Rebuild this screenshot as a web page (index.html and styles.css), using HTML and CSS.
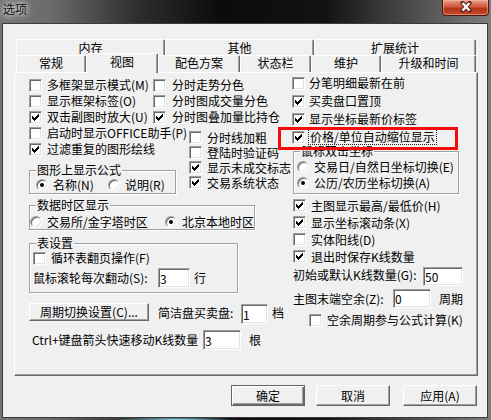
FILE: index.html
```html
<!DOCTYPE html>
<html lang="zh-CN">

<head>
    <meta charset="utf-8">
    <title>选项</title>
    <link rel="stylesheet" href="styles.css">
</head>

<body>

    <svg class="defs" width="0" height="0">
        <symbol id="tick" viewBox="0 0 7 7">
            <path d="M6 0h1v1h-1zM5 1h2v1h-2zM0 2h1v1h-1zM4 2h3v1h-3zM0 3h2v1h-2zM3 3h3v1h-3zM0 4h5v1h-5zM1 5h3v1h-3zM2 6h1v1h-1z" />
        </symbol>
    </svg>

    <div class="window">
        <div class="titlebar">
            <span class="title">选项</span>
            <div class="close">
                <svg width="14" height="12" viewBox="0 0 14 12">
                    <path d="M3.5 2l7 7.5M10.5 2l-7 7.5" stroke="#5a2418" stroke-width="4.2" stroke-linecap="round" />
                    <path d="M3.5 2l7 7.5M10.5 2l-7 7.5" stroke="#fff" stroke-width="2.4" />
                </svg>
            </div>
        </div>

        <div class="client">
            <div class="tabs">
                <div class="tabrow back">
                    <div class="tab tab-mem">内存</div>
                    <div class="tab tab-other">其他</div>
                    <div class="tab tab-ext">扩展统计</div>
                </div>
                <div class="tabrow front">
                    <div class="tab tab-gen">常规</div>
                    <div class="tab tab-view sel">视图</div>
                    <div class="tab tab-color">配色方案</div>
                    <div class="tab tab-status">状态栏</div>
                    <div class="tab tab-maint">维护</div>
                    <div class="tab tab-up">升级和时间</div>
                </div>
            </div>

            <div class="panel">
                <div class="upper">
                    <div class="col col-a">
                        <div class="chk"><span class="box"></span>多框架显示模式(M)</div>
                        <div class="chk"><span class="box"></span>显示框架标签(O)</div>
                        <div class="chk"><span class="box"><svg><use href="#tick" /></svg></span>双击副图时放大(U)</div>
                        <div class="chk"><span class="box"></span>启动时显示OFFICE助手(P)</div>
                        <div class="chk"><span class="box"><svg><use href="#tick" /></svg></span>过滤重复的图形绘线</div>

                        <fieldset class="group g-formula">
                            <legend>图形上显示公式</legend>
                            <div class="in">
                                <span class="opt opt-name"><span class="radio on"></span>名称(N)</span>
                                <span class="opt"><span class="radio"></span>说明(R)</span>
                            </div>
                        </fieldset>
                    </div>

                    <div class="col col-b">
                        <div class="chk"><span class="box"></span>分时走势分色</div>
                        <div class="chk"><span class="box"></span>分时图成交量分色</div>
                        <div class="chk"><span class="box"><svg><use href="#tick" /></svg></span>分时图叠加量比持仓</div>
                        <div class="sub">
                            <div class="chk"><span class="box"></span>分时线加粗</div>
                            <div class="chk"><span class="box"></span>登陆时验证码</div>
                            <div class="chk"><span class="box"><svg><use href="#tick" /></svg></span>显示未成交标志</div>
                            <div class="chk"><span class="box"><svg><use href="#tick" /></svg></span>交易系统状态</div>
                        </div>
                    </div>

                    <div class="col col-c">
                        <div class="chk"><span class="box"></span>分笔明细最新在前</div>
                        <div class="chk"><span class="box"><svg><use href="#tick" /></svg></span>买卖盘口置顶</div>
                        <div class="chk"><span class="box"><svg><use href="#tick" /></svg></span>显示坐标最新价标签</div>
                        <div class="chk focused"><span class="box"><svg><use href="#tick" /></svg></span><span class="focus">价格/单位自动缩位显示</span>
                            <span class="marker"></span>
                        </div>

                        <fieldset class="group g-mouse">
                            <legend>鼠标双击坐标</legend>
                            <div class="in">
                                <div class="opt"><span class="radio"></span>交易日/自然日坐标切换(E)</div>
                                <div class="opt"><span class="radio on"></span><span class="key">公历/农历坐标切换(A)</span></div>
                            </div>
                        </fieldset>
                    </div>
                </div>

                <div class="lower">
                    <div class="col col-left">
                        <fieldset class="group g-zone">
                            <legend>数据时区显示</legend>
                            <div class="in">
                                <span class="opt opt-ex"><span class="radio"></span>交易所/金字塔时区</span>
                                <span class="opt"><span class="radio on"></span>北京本地时区</span>
                            </div>
                        </fieldset>

                        <fieldset class="group g-table">
                            <legend>表设置</legend>
                            <div class="in">
                                <div class="chk"><span class="box"></span>循环表翻页操作(F)</div>
                                <div class="field-row">
                                    <span class="lbl lbl-wheel">鼠标滚轮每次翻动(S):</span>
                                    <input class="edit edit-wheel" type="text" value="3">
                                    <span class="unit">行</span>
                                </div>
                            </div>
                        </fieldset>

                        <div class="field-row period-row">
                            <button class="btn btn-period">周期切换设置(C)...</button>
                            <span class="lbl lbl-simple">简洁盘买卖盘:</span>
                            <input class="edit edit-simple" type="text" value="1">
                            <span class="unit">档</span>
                        </div>

                        <div class="field-row ctrl-row">
                            <span class="lbl lbl-ctrl">Ctrl+键盘箭头快速移动K线数量</span>
                            <input class="edit edit-ctrl" type="text" value="3">
                            <span class="unit unit-gen">根</span>
                        </div>
                    </div>

                    <div class="col col-right">
                        <div class="chk"><span class="box"><svg><use href="#tick" /></svg></span>主图显示最高/最低价(H)</div>
                        <div class="chk"><span class="box"><svg><use href="#tick" /></svg></span>显示坐标滚动条(X)</div>
                        <div class="chk"><span class="box"></span>实体阳线(D)</div>
                        <div class="chk"><span class="box"><svg><use href="#tick" /></svg></span>退出时保存K线数量</div>

                        <div class="field-row init-row">
                            <span class="lbl lbl-init">初始或默认K线数量(G):</span>
                            <input class="edit edit-init" type="text" value="50">
                        </div>
                        <div class="field-row tail-row">
                            <span class="lbl lbl-tail">主图末端空余(Z):</span>
                            <input class="edit edit-tail" type="text" value="0">
                            <span class="unit unit-period">周期</span>
                        </div>
                        <div class="chk chk-empty"><span class="box"></span>空余周期参与公式计算(K)</div>
                    </div>
                </div>
            </div>

            <div class="actions">
                <button class="btn btn-ok">确定</button>
                <button class="btn btn-cancel">取消</button>
                <button class="btn btn-apply">应用(A)</button>
            </div>
        </div>
    </div>

</body>

</html>
```

FILE: styles.css
```css
* {
    box-sizing: border-box;
}

body {
    margin: 0;
    font: 12px/14px "Noto Sans CJK SC", "Noto Sans", sans-serif;
    color: #000;
    background: #1c1c1c;
}

.defs {
    display: none;
}

/* window frame */

.window {
    width: 491px;
    height: 420px;
    display: flex;
    flex-direction: column;
    background:
        radial-gradient(ellipse 62px 3px at 177px 420px, #8fe6ff, rgba(143, 230, 255, 0)),
        linear-gradient(90deg, #767676 0, #6c6c6c 10%, #2e2e2e 28%, #0b0b0b 45%, #121212 66%, #4c4c4c 84%, #7e7e7e 100%);
}

.titlebar {
    height: 23px;
    flex: none;
    display: flex;
    align-items: flex-start;
}

.title {
    margin: 2px 0 0 3px;
    color: #111;
    text-shadow: 0 0 5px #fff, 0 0 9px rgba(255, 255, 255, 0.8);
}

.close {
    margin: 0 2px 0 auto;
    width: 47px;
    height: 16px;
    display: flex;
    align-items: center;
    justify-content: center;
    border: 1px solid #4a1a10;
    border-top: none;
    border-radius: 0 0 4px 4px;
    background: linear-gradient(#e7a08a, #d1583b 45%, #b4301a 58%, #c8502e);
    box-shadow: inset 0 0 0 1px rgba(255, 200, 180, 0.45);
}

.close svg {
    display: block;
    margin-top: -1px;
}

.client {
    flex: 1;
    margin: 0 3px 2px 2px;
    border: 1px solid #3a3a3a;
    background: #f0f0f0;
}

/* tabs */

.tabs {
    margin: 15px 0 0 13px;
    width: 460px;
}

.tabrow {
    display: flex;
    align-items: flex-end;
}

.tabrow.back {
    height: 16px;
}

.tabrow.front {
    height: 17px;
}

.tab {
    height: 100%;
    text-align: center;
    border-top: 1px solid #fff;
    border-left: 1px solid #fff;
    border-right: 1px solid #696969;
    border-radius: 2px 2px 0 0;
    box-shadow: inset -1px 0 #a0a0a0;
}

.back .tab {
    padding-top: 1px;
}

.tab.sel {
    height: 20px;
    margin-bottom: -1px;
    padding-top: 1px;
    position: relative;
    z-index: 1;
    background: #f0f0f0;
}

.tab-mem,
.tab-other {
    width: 149px;
}

.tab-ext {
    width: 162px;
}

.tab-gen,
.tab-maint {
    width: 70px;
}

.tab-view {
    width: 72px;
}

.tab-color {
    width: 82px;
}

.tab-status {
    width: 71px;
}

.tab-up {
    width: 95px;
}

.panel {
    margin-left: 11px;
    width: 464px;
    height: 304px;
    border: 1px solid;
    border-color: #fff #696969 #696969 #fff;
    box-shadow: inset -1px -1px #a0a0a0;
}

/* controls */

.chk,
.opt,
.field-row {
    display: flex;
    align-items: center;
    white-space: nowrap;
}

.chk {
    gap: 5px;
}

.opt {
    gap: 5px;
}

.box {
    width: 13px;
    height: 13px;
    flex: none;
    background: #fff;
    border: 1px solid;
    border-color: #a0a0a0 #fff #fff #a0a0a0;
    box-shadow: inset 1px 1px #696969, inset -1px -1px #e3e3e3;
}

.box svg {
    display: block;
    width: 7px;
    height: 7px;
    margin: 2px 0 0 2px;
    shape-rendering: crispEdges;
}

.radio {
    width: 12px;
    height: 12px;
    flex: none;
    position: relative;
    border-radius: 50%;
    background: #fff;
    border: 1px solid;
    border-color: #a0a0a0 #fff #fff #a0a0a0;
    box-shadow: inset 1px 1px #696969, inset -1px -1px #e3e3e3;
}

.radio.on::after {
    content: "";
    position: absolute;
    left: 3px;
    top: 3px;
    width: 4px;
    height: 4px;
    border-radius: 50%;
    background: #000;
}

.group {
    margin: 0;
    padding: 0;
    min-width: 0;
    border: 1px solid #a0a0a0;
    box-shadow: inset 1px 1px #fff, 1px 1px #fff;
}

.group legend {
    margin-left: 6px;
    padding: 0 1px;
    line-height: 14px;
    background: #f0f0f0;
}

.edit {
    margin: 0;
    padding: 0 0 0 1px;
    font: inherit;
    color: #000;
    background: #fff;
    border: 1px solid;
    border-color: #a0a0a0 #fff #fff #a0a0a0;
    box-shadow: inset 1px 1px #696969, inset -1px -1px #e3e3e3;
    outline: none;
}

.btn {
    margin: 0;
    padding: 0;
    font: inherit;
    color: #000;
    text-align: center;
    background: #f0f0f0;
    border: 1px solid;
    border-color: #fff #696969 #696969 #fff;
    box-shadow: inset -1px -1px #a0a0a0;
}

/* upper part of the panel */

.upper {
    display: flex;
    height: 121px;
    padding-left: 14px;
}

.col-a {
    width: 124px;
    padding-top: 4px;
}

.col-a > .chk {
    height: 16px;
}

.g-formula {
    width: 147px;
    margin-top: 6px;
}

.g-formula .in {
    display: flex;
    height: 16px;
    padding: 1px 0 1px 6px;
}

.opt-name {
    width: 72px;
}

.col-b {
    width: 139px;
    padding-top: 4px;
}

.col-b > .chk {
    height: 16px;
    gap: 6px;
}

.sub {
    margin: 5px 0 0 36px;
}

.sub .chk {
    height: 15px;
}

.col-c {
    flex: 1;
    padding-top: 1px;
}

.col-c > .chk {
    height: 18px;
    gap: 4px;
}

.chk.focused {
    width: 167px;
    position: relative;
    z-index: 2;
    background: #f0f0f0;
}

.focus {
    padding: 0 1px;
    outline: 1px dotted #202020;
}

.marker {
    position: absolute;
    left: -14px;
    top: -1px;
    width: 180px;
    height: 23px;
    border: 3px solid #f20c0c;
}

.g-mouse {
    width: 166px;
    margin: -2px 0 0 1px;
}

.g-mouse .in {
    padding: 1px 0 2px 3px;
}

.g-mouse .opt {
    height: 16px;
}

/* lower part of the panel */

.lower {
    display: flex;
    padding-left: 14px;
}

.col-left {
    width: 264px;
}

.g-zone {
    width: 226px;
    margin-top: 4px;
}

.g-zone .in {
    display: flex;
    height: 17px;
    padding-top: 2px;
}

.opt-ex {
    width: 142px;
}

.g-table {
    width: 209px;
    margin-top: 6px;
}

.g-table .in {
    padding: 0 0 4px 3px;
}

.g-table .chk {
    height: 16px;
}

.g-table .field-row {
    margin-top: 2px;
}

.lbl-wheel {
    width: 125px;
}

.edit-wheel {
    width: 32px;
    height: 20px;
}

.unit {
    margin-left: 4px;
}

.period-row {
    margin-top: 10px;
    align-items: flex-start;
}

.btn-period {
    width: 120px;
    height: 18px;
}

.lbl-simple {
    width: 83px;
    margin: 3px 0 0 9px;
}

.edit-simple {
    width: 27px;
    height: 20px;
    margin-top: 1px;
}

.period-row .unit {
    margin-top: 3px;
}

.ctrl-row {
    margin-top: 6px;
    padding-left: 3px;
}

.lbl-ctrl {
    width: 171px;
}

.edit-ctrl {
    width: 38px;
    height: 20px;
}

.unit-gen {
    margin-left: 8px;
}

.col-right {
    padding-top: 3px;
}

.col-right > .chk {
    height: 17px;
}

.init-row {
    margin-top: 1px;
    height: 20px;
}

.lbl-init {
    width: 130px;
    margin-top: -3px;
}

.edit-init {
    width: 40px;
    height: 19px;
}

.tail-row {
    margin-top: 3px;
}

.lbl-tail {
    width: 100px;
}

.edit-tail {
    width: 38px;
    height: 19px;
}

.unit-period {
    margin-left: 8px;
}

.col-right > .chk-empty {
    height: 16px;
    margin: 4px 0 0 16px;
}

/* dialog buttons */

.actions {
    display: flex;
    justify-content: flex-end;
    margin: 9px 10px 0 0;
}

.actions .btn {
    width: 74px;
    height: 21px;
}

.btn-ok {
    border-color: #646464;
    box-shadow: inset 1px 1px #fff, inset -1px -1px #696969, inset -2px -2px #a0a0a0;
}

.btn-cancel {
    margin-left: 11px;
}

.btn-apply {
    margin-left: 13px;
}
```
